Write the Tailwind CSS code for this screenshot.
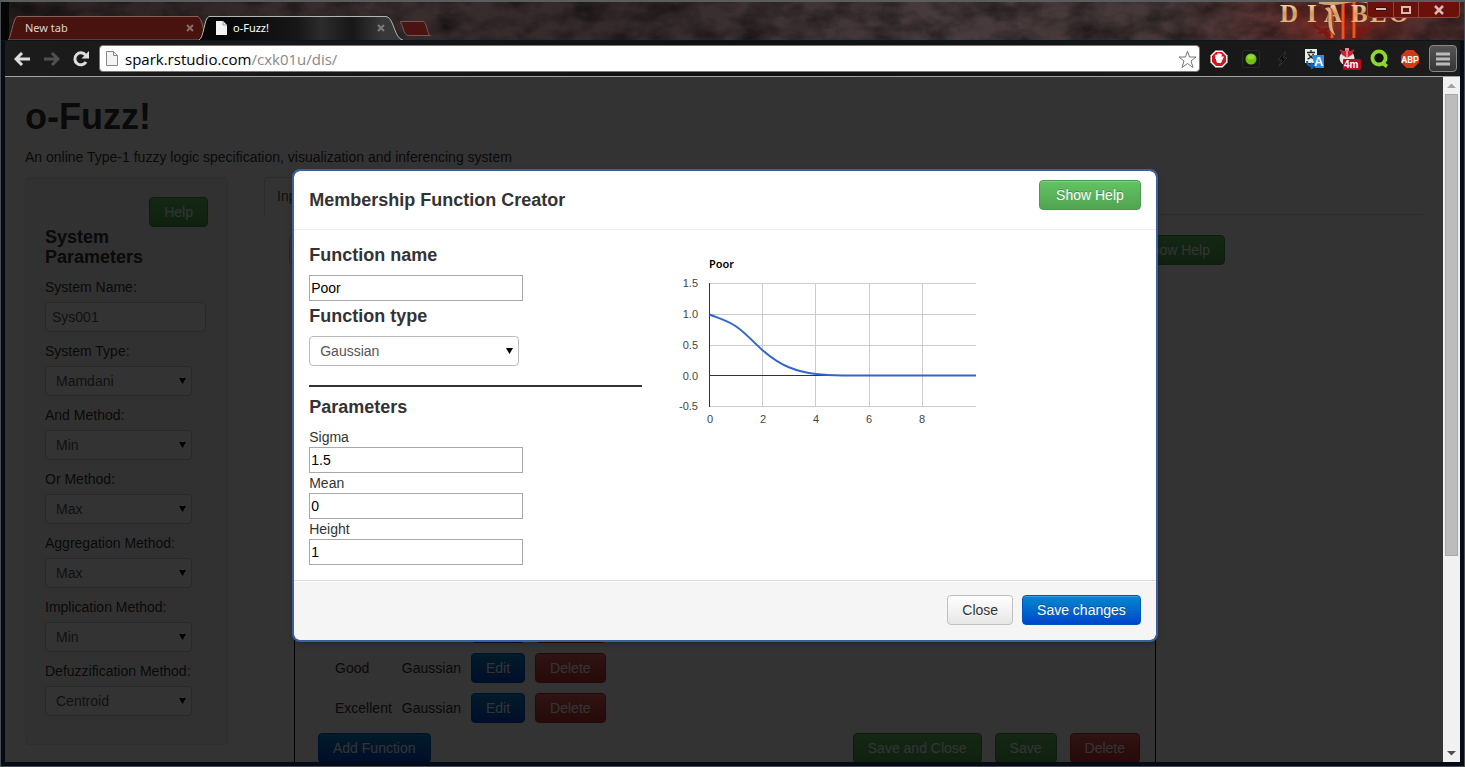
<!DOCTYPE html>
<html lang="en">
<head>
<meta charset="utf-8">
<title>o-Fuzz!</title>
<script src="https://cdn.jsdelivr.net/npm/@tailwindcss/browser@4"></script>
</head>
<body class="flex h-screen flex-col overflow-hidden border border-[#4b4d50] border-t-2 border-t-[#5a5c5e] bg-[#050c18] font-['Liberation_Sans',sans-serif] text-sm leading-5 text-[#333]">

<!-- Window title bar with tabs -->
<header class="relative h-[39px] shrink-0 overflow-hidden border-b border-[#0b1420] bg-[#332829]">
  <svg class="absolute inset-0 h-full w-full" preserveAspectRatio="none" aria-hidden="true">
    <defs>
      <filter id="grit" x="0" y="0" width="100%" height="100%">
        <feTurbulence type="fractalNoise" baseFrequency="0.03 0.05" numOctaves="5" seed="8"/>
        <feColorMatrix values="0 0 0 0 0  0 0 0 0 0  0 0 0 0 0  1 0 0 0 -0.35"/>
      </filter>
      <linearGradient id="stone"><stop offset="0" stop-color="#2a2121"/><stop offset=".25" stop-color="#3a2e2f"/><stop offset=".42" stop-color="#352a2b"/><stop offset=".65" stop-color="#483b3d"/><stop offset=".8" stop-color="#463839"/><stop offset=".9" stop-color="#663230"/><stop offset="1" stop-color="#482c2c"/></linearGradient>
    </defs>
    <rect width="100%" height="100%" fill="url(#stone)"/>
    <rect width="100%" height="100%" filter="url(#grit)"/>
    <rect width="8" height="100%" fill="#050505"/>
  </svg>
  <div class="relative flex h-full items-end justify-between">
    <div class="flex items-end pl-[7px] font-['Noto_Sans',sans-serif] text-[11px] leading-4 text-white">
      <button class="relative flex h-6 w-[197px] items-center pr-[11px] pl-[17px] text-left">
        <svg class="absolute inset-0" width="197" height="24" aria-hidden="true"><path d="M0 24C3 22 5 3 9 .5H190C194 3 196 14 197 24Z" fill="#48130f" stroke="#84605c"/></svg>
        <span class="relative flex-1 text-[#ded3d3]">New tab</span>
        <svg class="relative" width="8" height="8" aria-hidden="true"><path d="M1 1l6 6M7 1L1 7" stroke="#8b6b69" stroke-width="2"/></svg>
      </button>
      <button class="relative -ml-1.5 flex h-6 w-[204px] items-center gap-1.5 pr-[18px] pl-[17px] text-left">
        <svg class="absolute inset-0" width="204" height="24" aria-hidden="true"><defs><linearGradient id="act"><stop offset=".1" stop-color="#060606"/><stop offset=".48" stop-color="#171717"/><stop offset=".6" stop-color="#2c2c2c"/><stop offset=".75" stop-color="#171717"/><stop offset=".9" stop-color="#383838"/></linearGradient></defs><path d="M0 24C5 22 5 2 10 .5H187C195 1 195 23 204 24Z" fill="url(#act)"/><path d="M0 24C5 22 5 2 10 .5H187C195 1 195 23 204 24" fill="none" stroke="#b5b5b5"/></svg>
        <svg class="relative" width="11" height="14" aria-hidden="true"><path d="M0 0h7l4 4v10H0z" fill="#f3f3f3"/><path d="M7 0v4h4" fill="none" stroke="#999"/></svg>
        <span class="relative flex-1">o-Fuzz!</span>
        <svg class="relative" width="8" height="8" aria-hidden="true"><path d="M1 1l6 6M7 1L1 7" stroke="#7c7c7c" stroke-width="2"/></svg>
      </button>
      <button aria-label="Open a new tab" class="-ml-1 pb-1"><svg width="32" height="15"><path d="M2 .5H24C28 1 28 13 31 14.500H9C4 14 4 2 1 1Z" fill="#4a1412" stroke="#7b5552"/></svg></button>
    </div>
    <div class="relative h-full">
      <svg width="196" height="38" aria-hidden="true">
        <defs>
          <linearGradient id="gold" x2="0" y2="1"><stop offset="0" stop-color="#fff0c8"/><stop offset=".5" stop-color="#d39a62"/><stop offset="1" stop-color="#f2c69a"/></linearGradient>
          <radialGradient id="ember"><stop offset="0" stop-color="#a82613"/><stop offset="1" stop-color="#7a1c14" stop-opacity="0"/></radialGradient>
        </defs>
        <ellipse cx="76" cy="20" rx="75" ry="26" fill="url(#ember)" opacity=".55"/>
        <path d="M64 0v36M75 0v37M86 0v36" stroke="#c92a0c" stroke-width="4"/>
        <path d="M64 0v36M75 0v37M86 0v36" stroke="#ff8a38" stroke-width="1"/>
        <path d="M46 22q5 8 13 5q-4 5 2 10M104 22q-5 8-13 5q4 5-2 10M50 31q8-3 12 3M100 31q-8-3-12 3" fill="none" stroke="#7e1511" stroke-width="2"/>
        <path d="M51 0q10 3 25 0t25 0" fill="none" stroke="#caa76e" stroke-width="3"/>
        <text y="20" x="12 39 56 83 102 121" font-family="Liberation Serif, serif" font-weight="700" font-size="25" fill="url(#gold)">DIABLO</text>
        <path d="M56 7q6-5 8 2v9q0 9 4 16q-8-3-8-14v-10q-2-3-4-3" fill="#e0a77a" stroke="#3a160c" stroke-width=".5"/>
      </svg>
      <div class="absolute top-0 right-1 flex h-4 rounded-b-sm border border-t-0 border-[#8d4640] bg-[#6c100a]">
        <button aria-label="Minimise" class="flex w-[25px] items-center justify-center"><svg width="12" height="5"><path d="M.5.5h11v3H.5z" fill="#d9b9b6" stroke="#3b0c08"/></svg></button>
        <button aria-label="Maximise" class="flex w-[25px] items-center justify-center border-l border-[#8d4640]"><svg width="12" height="10"><path d="M2 2h8v6H2z" fill="none" stroke="#d9b9b6" stroke-width="2"/></svg></button>
        <button aria-label="Close window" class="flex w-[41px] items-center justify-center border-l border-[#8d4640]"><svg width="12" height="10"><path d="M2 1l8 8M10 1L2 9" stroke="#d9b9b6" stroke-width="2.500"/></svg></button>
      </div>
    </div>
  </div>
</header>

<!-- Toolbar -->
<nav class="mx-1 flex h-9 shrink-0 items-center border-b border-[#a3a3a3] bg-linear-to-r from-[#1c1c1c] via-[#101010] to-[#1c1c1c] pr-[3px] pl-[9px]">
  <button aria-label="Back"><svg width="16" height="14"><path d="M8 1L2 7l6 6M2 7h14" fill="none" stroke="#ddd" stroke-width="3"/></svg></button>
  <button aria-label="Forward" class="ml-[13px]"><svg width="17" height="14"><path d="M9 1l6 6-6 6M15 7H1" fill="none" stroke="#505050" stroke-width="3"/></svg></button>
  <button aria-label="Reload" class="ml-[13px]"><svg width="16" height="16"><path d="M13 11A6 6 0 1 1 12.500 4" fill="none" stroke="#ddd" stroke-width="3"/><path d="M16 0v7.500H8.500z" fill="#ddd"/></svg></button>
  <div class="ml-[10px] flex h-[27px] flex-1 items-center gap-[7px] rounded-sm border border-[#777] bg-white px-1.5">
    <svg class="shrink-0" width="12" height="15" aria-hidden="true"><path d="M.5.5h7l4 4v10H.5z" fill="#f4f4f4" stroke="#888"/><path d="M7.500.5v4h4" fill="none" stroke="#888"/></svg>
    <div class="flex-1 font-['Open_Sans',sans-serif] text-[15px] text-[#888]" role="textbox" aria-label="Address"><span class="text-black">spark.rstudio.com</span>/cxk01u/dis/</div>
    <button aria-label="Bookmark this page" class="-mr-1"><svg width="19" height="18"><path d="M9.500 1l2 6h6.500l-5 4 2 6.500-5.500-4-5.500 4 2-6.500-5-4h6.500z" fill="#fff" stroke="#777"/></svg></button>
  </div>
  <button aria-label="Stop ads" class="ml-[10px]"><svg width="18" height="18"><path d="M5.500.5h7l5 5v7l-5 5h-7l-5-5v-7z" fill="#fff"/><path d="M6 2h6l4 4v6l-4 4H6l-4-4V6z" fill="#d3131b"/><path d="M6 9V5.500h1V9M8 9V4h1v5M10 9V4.500h1V9" stroke="#fff" stroke-width="1.400"/><path d="M5.500 8H11l2-2 .8 1-2.800 6H7z" fill="#fff"/></svg></button>
  <button aria-label="Status" class="ml-[14px]"><svg width="18" height="18"><rect x=".5" y=".5" width="17" height="17" rx="2" fill="#171717" stroke="#2a2a2a"/><circle cx="9" cy="9" r="5.500" fill="#6fc40b"/><ellipse cx="9" cy="7" rx="3.500" ry="2.500" fill="#8fdc3a"/></svg></button>
  <button aria-label="Quick action" class="ml-[17px]"><svg width="12" height="16"><path d="M8 1L1 9h4l-3 6 8-8H6l3-6z" fill="#0a0a0a" stroke="#333"/></svg></button>
  <button aria-label="Translate" class="ml-4"><svg width="20" height="20"><path d="M0 0h12v14H0z" fill="#e9efe5"/><path d="M6 1v2M2 3.500h8M3.500 5q2 4 6 5M8.500 5q-2 4-6 5" stroke="#222" stroke-width="1.300" fill="none"/><path d="M7 6h12v13H10z" fill="#2b8fe4"/><path d="M2 12q0 5 6 5M6 14l3 3-3 3" fill="none" stroke="#1563b8" stroke-width="2"/><text x="9" y="17" font-family="Liberation Sans, sans-serif" font-size="13" font-weight="700" fill="#fff">A</text></svg></button>
  <button aria-label="Timer" class="ml-[14px]"><svg width="23" height="22"><path d="M6 0h4v3H6z" fill="#ef8a93"/><circle cx="8" cy="10" r="7.500" fill="#e9e0e0"/><path d="M8 10L2 6a7 7 0 0 1 12 0z" fill="#cf1f32"/><path d="M8 10v-7" stroke="#eee"/><path d="M1 2l3 2M15 2l-3 2" stroke="#cf1f32" stroke-width="2"/><rect x="4" y="11" width="18" height="11" rx="1" fill="#b30d22"/><text x="5" y="20" font-family="Liberation Sans, sans-serif" font-size="10" font-weight="700" fill="#fff">4m</text></svg></button>
  <button aria-label="Search extension" class="ml-[8px]"><svg width="19" height="19"><circle cx="9" cy="9" r="6.500" fill="none" stroke="#8dd62c" stroke-width="4"/><path d="M10 9l8 7-2 3-8-6z" fill="#8dd62c"/><circle cx="9" cy="9" r="4.500" fill="#101010"/></svg></button>
  <button aria-label="Adblock Plus" class="ml-[12px]"><svg width="18" height="18"><path d="M5.500 0h7L18 5.500v7L12.500 18h-7L0 12.500v-7z" fill="#d23a16"/><text x="9" y="12.500" text-anchor="middle" font-family="Roboto, sans-serif" font-size="9" font-weight="700" fill="#fff">ABP</text></svg></button>
  <button aria-label="Menu" class="ml-[10px] flex h-[27px] w-7 items-center justify-center rounded-sm border border-[#888] bg-linear-to-b from-[#555] to-[#353535]"><svg width="14" height="14"><path d="M0 2h14M0 7h14M0 12h14" stroke="#bbb" stroke-width="3"/></svg></button>
</nav>

<!-- Web page with its scroll bar -->
<div class="mr-1 mb-1 ml-1 flex min-h-0 flex-1 bg-white">
  <div class="relative min-w-0 flex-1 overflow-hidden">
    <main class="px-5 pt-5">
      <h1 class="text-4xl leading-10 font-bold">o-Fuzz!</h1>
      <p class="my-2.5">An online Type-1 fuzzy logic specification, visualization and inferencing system</p>
      <div class="flex items-start gap-9">
        <form class="flex w-[203px] shrink-0 flex-col rounded border border-[#e3e3e3] bg-[#f5f5f5] px-[19px] pt-[19px] pb-7 shadow-[inset_0_1px_1px_rgba(0,0,0,0.05)]">
          <button type="button" class="self-end rounded border border-[#419041] bg-linear-to-b from-[#62c462] to-[#51a351] px-3.5 py-1 text-white">Help</button>
          <h4 class="mb-2.5 text-lg leading-5 font-bold">System Parameters</h4>
          <label for="name">System Name:</label>
          <input id="name" value="Sys001" class="mt-[5px] mb-[9px] h-[30px] w-[161px] rounded border border-[#ccc] bg-white px-1.5 text-[#555]">
          <label for="type" class="whitespace-nowrap">System Type:</label>
          <div class="relative mt-[5px] mb-[9px] w-[147px]"><select id="type" class="block h-[30px] w-full appearance-none rounded border border-[#ccc] bg-white px-2.5 text-[#555]"><option>Mamdani</option></select><svg class="pointer-events-none absolute top-3 right-1.5" width="7" height="6"><path d="M0 0h7L3.500 6z"/></svg></div>
          <label for="and" class="whitespace-nowrap">And Method:</label>
          <div class="relative mt-[5px] mb-[9px] w-[147px]"><select id="and" class="block h-[30px] w-full appearance-none rounded border border-[#ccc] bg-white px-2.5 text-[#555]"><option>Min</option></select><svg class="pointer-events-none absolute top-3 right-1.5" width="7" height="6"><path d="M0 0h7L3.500 6z"/></svg></div>
          <label for="or" class="whitespace-nowrap">Or Method:</label>
          <div class="relative mt-[5px] mb-[9px] w-[147px]"><select id="or" class="block h-[30px] w-full appearance-none rounded border border-[#ccc] bg-white px-2.5 text-[#555]"><option>Max</option></select><svg class="pointer-events-none absolute top-3 right-1.5" width="7" height="6"><path d="M0 0h7L3.500 6z"/></svg></div>
          <label for="agg" class="whitespace-nowrap">Aggregation Method:</label>
          <div class="relative mt-[5px] mb-[9px] w-[147px]"><select id="agg" class="block h-[30px] w-full appearance-none rounded border border-[#ccc] bg-white px-2.5 text-[#555]"><option>Max</option></select><svg class="pointer-events-none absolute top-3 right-1.5" width="7" height="6"><path d="M0 0h7L3.500 6z"/></svg></div>
          <label for="imp" class="whitespace-nowrap">Implication Method:</label>
          <div class="relative mt-[5px] mb-[9px] w-[147px]"><select id="imp" class="block h-[30px] w-full appearance-none rounded border border-[#ccc] bg-white px-2.5 text-[#555]"><option>Min</option></select><svg class="pointer-events-none absolute top-3 right-1.5" width="7" height="6"><path d="M0 0h7L3.500 6z"/></svg></div>
          <label for="defuzz" class="whitespace-nowrap">Defuzzification Method:</label>
          <div class="relative mt-[5px] w-[147px]"><select id="defuzz" class="block h-[30px] w-full appearance-none rounded border border-[#ccc] bg-white px-2.5 text-[#555]"><option>Centroid</option></select><svg class="pointer-events-none absolute top-3 right-1.5" width="7" height="6"><path d="M0 0h7L3.500 6z"/></svg></div>
        </form>

        <section class="min-w-0 flex-1">
          <div class="flex border-b border-[#ddd]">
            <a href="#inputs" class="-mb-px rounded-t border border-b-0 border-[#ddd] bg-white px-3 pt-2 pb-[9px] text-[#555]">Inputs</a>
          </div>
          <div class="mt-5 mr-[198px] ml-[25px] flex justify-between">
            <button aria-label="Add input" class="h-[30px] w-24 rounded border border-[#bbb] bg-linear-to-b from-white to-[#e6e6e6]"></button>
            <button class="rounded border border-[#419041] bg-linear-to-b from-[#62c462] to-[#51a351] px-3.5 py-1 text-white">Show Help</button>
          </div>
          <div class="mt-5 ml-[30px] w-[862px] border border-black px-[23px] pt-[322px] pb-5">
            <table class="ml-3">
              <tr class="h-10"><td class="px-[5px]">Poor</td><td class="px-[5px]">Gaussian</td><td class="px-[5px]"><button class="rounded border border-[#0055cc] bg-linear-to-b from-[#0088cc] to-[#0044cc] px-3.5 py-1 text-white">Edit</button></td><td class="px-[5px]"><button class="rounded border border-[#bd362f] bg-linear-to-b from-[#ee5f5b] to-[#bd362f] px-3.5 py-1 text-white">Delete</button></td></tr>
              <tr class="h-10"><td class="px-[5px]">Good</td><td class="px-[5px]">Gaussian</td><td class="px-[5px]"><button class="rounded border border-[#0055cc] bg-linear-to-b from-[#0088cc] to-[#0044cc] px-3.5 py-1 text-white">Edit</button></td><td class="px-[5px]"><button class="rounded border border-[#bd362f] bg-linear-to-b from-[#ee5f5b] to-[#bd362f] px-3.5 py-1 text-white">Delete</button></td></tr>
              <tr class="h-10"><td class="px-[5px]">Excellent</td><td class="px-[5px]">Gaussian</td><td class="px-[5px]"><button class="rounded border border-[#0055cc] bg-linear-to-b from-[#0088cc] to-[#0044cc] px-3.5 py-1 text-white">Edit</button></td><td class="px-[5px]"><button class="rounded border border-[#bd362f] bg-linear-to-b from-[#ee5f5b] to-[#bd362f] px-3.5 py-1 text-white">Delete</button></td></tr>
            </table>
            <div class="mt-[5px] mr-[-8px] flex gap-[13px]">
              <button class="mr-auto rounded border border-[#0055cc] bg-linear-to-b from-[#0088cc] to-[#0044cc] px-3.5 py-1 text-white">Add Function</button>
              <button class="rounded border border-[#419041] bg-linear-to-b from-[#62c462] to-[#51a351] px-3.5 py-1 text-white">Save and Close</button>
              <button class="rounded border border-[#419041] bg-linear-to-b from-[#62c462] to-[#51a351] px-3.5 py-1 text-white">Save</button>
              <button class="rounded border border-[#bd362f] bg-linear-to-b from-[#ee5f5b] to-[#bd362f] px-3.5 py-1 text-white">Delete</button>
            </div>
          </div>
        </section>
      </div>
    </main>

    <!-- Dialog over the dimmed page -->
    <div class="absolute inset-0 bg-black/80 pt-[94px] pl-0.5">
      <div role="dialog" aria-labelledby="dlg" class="mx-auto w-3/5 rounded-md bg-white shadow-[0_3px_7px_rgba(0,0,0,0.3)] outline-2 outline-[#3b5f9f]">
        <div class="flex items-start justify-between border-b border-[#eee] px-[15px] py-[9px]">
          <h4 id="dlg" class="my-2.5 text-lg leading-5 font-bold">Membership Function Creator</h4>
          <button class="rounded border border-[#4b9a4b] bg-linear-to-b from-[#62c462] to-[#51a351] px-4 py-1 text-white shadow-[inset_0_1px_0_rgba(255,255,255,0.2)] text-shadow-[0_-1px_0_rgba(0,0,0,0.25)]">Show Help</button>
        </div>
        <div class="flex gap-[18px] p-[15px]">
          <form class="flex w-2/5 flex-col">
            <label for="fn" class="mb-2.5 text-lg leading-5 font-bold">Function name</label>
            <input id="fn" value="Poor" class="h-[26px] w-[214px] border border-[#a9a9a9] px-px text-black">
            <label for="ft" class="mt-[5px] mb-2.5 text-lg leading-5 font-bold">Function type</label>
            <div class="relative w-[210px]"><select id="ft" class="block h-[30px] w-full appearance-none rounded border border-[#bbb] bg-white px-2.5 text-[#555]"><option>Gaussian</option></select><svg class="pointer-events-none absolute top-3 right-1.5" width="7" height="6"><path d="M0 0h7L3.500 6z"/></svg></div>
            <hr class="mt-[19px] mb-2.5 border-t-2 border-[#333]">
            <h4 class="mb-2.5 text-lg leading-5 font-bold">Parameters</h4>
            <label for="sigma">Sigma</label>
            <input id="sigma" value="1.5" class="h-[26px] w-[214px] border border-[#a9a9a9] px-px text-black">
            <label for="mean">Mean</label>
            <input id="mean" value="0" class="h-[26px] w-[214px] border border-[#a9a9a9] px-px text-black">
            <label for="height">Height</label>
            <input id="height" value="1" class="h-[26px] w-[214px] border border-[#a9a9a9] px-px text-black">
          </form>
          <svg class="shrink-0" width="330" height="200" role="img" aria-label="Poor membership function">
            <path d="M49 38.500H316M49 69.500H316M49 100.500H316M49 161.500H316M102.500 38V161M155.500 38V161M209.500 38V161M262.500 38V161" stroke="#ccc"/>
            <path d="M49.500 38V162M49 130.500H316" stroke="#333"/>
            <path d="M49.500 69.500C58 73 67.500 75.500 76.200 81.500C85 87.500 94 97.500 102.800 105.500C111 112.500 120.500 119 129.500 122.500C138 126 147 128 156 129C165 130 174 130.300 182.600 130.500C191 130.700 200 130.500 209.500 130.500H316" fill="none" stroke="#36c" stroke-width="2"/>
            <text x="49" y="23" font-family="Noto Sans, sans-serif" font-size="11" font-weight="600">Poor</text>
            <g font-family="Liberation Sans, sans-serif" font-size="11" fill="#444">
              <g text-anchor="end"><text x="38" y="42">1.5</text><text x="38" y="73">1.0</text><text x="38" y="104">0.5</text><text x="38" y="135">0.0</text><text x="38" y="165">-0.5</text></g>
              <g text-anchor="middle"><text x="50" y="178">0</text><text x="103" y="178">2</text><text x="156" y="178">4</text><text x="209" y="178">6</text><text x="262" y="178">8</text></g>
            </g>
          </svg>
        </div>
        <div class="flex justify-end gap-[9px] rounded-b-md border-t border-[#ddd] bg-[#f5f5f5] px-[15px] pt-3.5 pb-[15px] shadow-[inset_0_1px_0_#fff]">
          <button class="rounded border border-[#c0c0c0] bg-linear-to-b from-white to-[#e6e6e6] px-3.5 py-1 text-shadow-[0_1px_1px_rgba(255,255,255,0.75)]">Close</button>
          <button class="rounded border border-[#0055bb] bg-linear-to-b from-[#0088cc] to-[#0044cc] px-3.5 py-1 text-white shadow-[inset_0_1px_0_rgba(255,255,255,0.2)] text-shadow-[0_-1px_0_rgba(0,0,0,0.25)]">Save changes</button>
        </div>
      </div>
    </div>
  </div>

  <div class="flex w-[17px] shrink-0 flex-col items-center bg-[#f1f1f1]" aria-hidden="true">
    <svg width="17" height="17"><path d="M4 11l4.500-4.500L13 11z" fill="#a3a3a3"/></svg>
    <div class="w-full flex-1 px-0.5"><div class="h-[71%] border border-[#a8a8a8] bg-[#bcbcbc]"></div></div>
    <svg width="17" height="17"><path d="M4 6l4.500 4.500L13 6z" fill="#505050"/></svg>
  </div>
</div>
</body>
</html>
